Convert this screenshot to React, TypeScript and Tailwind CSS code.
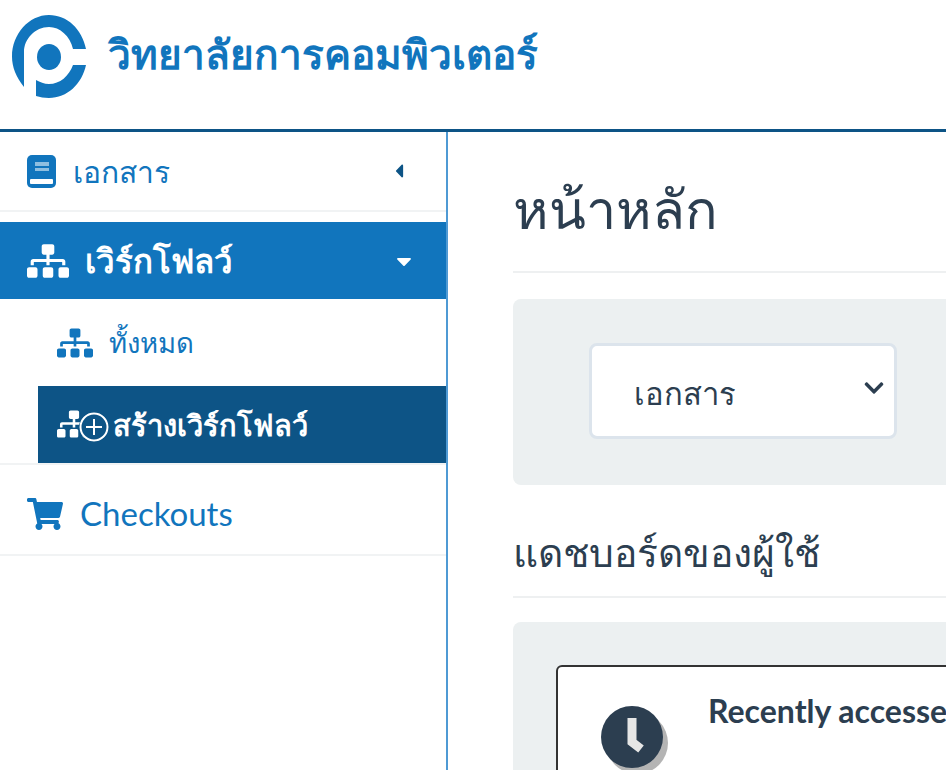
import React from "react";
import { FaSitemap, FaShoppingCart, FaCaretLeft, FaCaretDown, FaChevronDown } from "react-icons/fa";

const thai = "font-['Lato','Noto_Sans','DejaVu_Sans','Liberation_Sans',sans-serif]";

function Logo() {
  return (
    <svg width="74" height="83" viewBox="0 0 74 83" className="shrink-0" fill="#1175bd">
      <path d="M12 72 C4 62 0 52 0 41.5 C0 19 17 0 37 0 C55 0 70 14 74 34 L61 34 C58 21 48 12 37 12 C23 12 12 24 12 37 Z" />
      <path d="M24 65 C28 67 32 69 37 69 C48 69 57 61 61 50 L74 50 C70 69 55 83 37 83 C32 83 28 82 24 81 Z" />
      <ellipse cx="37" cy="42" rx="12" ry="13" />
    </svg>
  );
}

function BookIcon() {
  return (
    <svg width="29" height="33" viewBox="0 0 29 33">
      <rect x="0" y="0" width="29" height="33" rx="5" fill="#1175bd" />
      <rect x="8" y="7" width="14" height="4" fill="#8fbfe0" />
      <rect x="8" y="13" width="14" height="3" fill="#8fbfe0" />
      <rect x="3" y="24" width="23" height="5" rx="1" fill="white" />
    </svg>
  );
}

export default function App() {
  return (
    <div className={`h-[770px] w-[946px] overflow-hidden bg-white ${thai}`}>
      <header className="flex h-[132px] items-start border-b-[3px] border-[#0d5486] pl-[12px] pt-[15px]">
        <Logo />
        <span className="ml-[22px] mt-[14px] text-[40.5px] font-bold leading-[50px] text-[#1175bd]">
          วิทยาลัยการคอมพิวเตอร์
        </span>
      </header>
      <div className="flex h-[638px]">
        <aside className="w-[448px] shrink-0 border-r-2 border-[#4f9ad4]">
          <div className="flex h-[80px] items-center border-b-2 border-[#f1f3f4] pl-[27px] pr-[36px] text-[#1175bd]">
            <div className="w-[46px] shrink-0">
              <BookIcon />
            </div>
            <span className="flex-1 text-[30px] leading-none">เอกสาร</span>
            <FaCaretLeft className="text-[22px] text-[#0d5486]" />
          </div>
          <div className="mt-[10px] flex h-[77px] items-center bg-[#1175bd] pl-[27px] pr-[30px] text-white">
            <div className="w-[58px] shrink-0">
              <FaSitemap className="text-[42px]" />
            </div>
            <span className="flex-1 text-[33px] font-bold leading-none">เวิร์กโฟลว์</span>
            <FaCaretDown className="text-[24px]" />
          </div>
          <div className="flex h-[87px] items-center pl-[57px] text-[#1175bd]">
            <FaSitemap className="mr-[16px] text-[36px]" />
            <span className="text-[27.5px] leading-none">ทั้งหมด</span>
          </div>
          <div className="ml-[38px] flex h-[77px] items-center bg-[#0d5486] pl-[19px] font-bold text-white">
            <div className="relative h-[36px] w-[52px] shrink-0">
              <FaSitemap className="text-[34px]" />
              <svg
                width="30"
                height="30"
                viewBox="0 0 30 30"
                className="absolute bottom-[1px] right-0 rounded-full bg-[#0d5486]"
                fill="none"
                stroke="white"
                strokeWidth="2"
              >
                <circle cx="15" cy="15" r="13.5" />
                <path d="M15 7v16M7 15h16" />
              </svg>
            </div>
            <span className="ml-[4px] text-[29px] leading-none">สร้างเวิร์กโฟลว์</span>
          </div>
          <div className="flex h-[93px] items-center border-y-2 border-[#f1f3f4] pl-[27px] pt-[8px] text-[#1175bd]">
            <FaShoppingCart className="mr-[17px] text-[36px]" />
            <span className="text-[33px] leading-none">Checkouts</span>
          </div>
        </aside>
        <main className="min-w-0 flex-1 pl-[65px] text-[#2c3e50]">
          <h1 className="mt-[47px] text-[54px] font-normal leading-[60px]">หน้าหลัก</h1>
          <div className="mt-[32px] border-t-2 border-[#eef0f1]" />
          <div className="mt-[26px] h-[186px] rounded-l-[8px] bg-[#ecf0f1] pl-[76px] pt-[44px]">
            <div className="flex h-[96px] w-[308px] items-center rounded-[8px] border-[3px] border-[#dce4ec] bg-white pl-[42px] pr-[9px]">
              <span className="mt-[4px] flex-1 text-[31px] leading-none">เอกสาร</span>
              <FaChevronDown className="mb-[6px] text-[22px]" />
            </div>
          </div>
          <h2 className="mt-[40px] text-[39px] font-normal leading-[54px]">แดชบอร์ดของผู้ใช้</h2>
          <div className="mt-[17px] border-t-2 border-[#eef0f1]" />
          <div className="mt-[24px] h-[200px] rounded-l-[8px] bg-[#ecf0f1] pl-[43px] pt-[43px]">
            <div className="flex h-[200px] w-[500px] rounded-l-[6px] border-2 border-[#333] bg-white pl-[43px] pt-[26px]">
              <svg width="68" height="70" viewBox="0 0 68 70" className="mt-[12px] shrink-0">
                <circle cx="36" cy="38" r="31" fill="#b4b4b4" />
                <circle cx="31" cy="32" r="31" fill="#2c3e50" />
                <path d="M31 13 V37 L40 44" fill="none" stroke="#e6e6e6" strokeWidth="9" />
              </svg>
              <span className="ml-[39px] whitespace-nowrap text-[32px] font-bold leading-[36px]">Recently accessed</span>
            </div>
          </div>
        </main>
      </div>
    </div>
  );
}
